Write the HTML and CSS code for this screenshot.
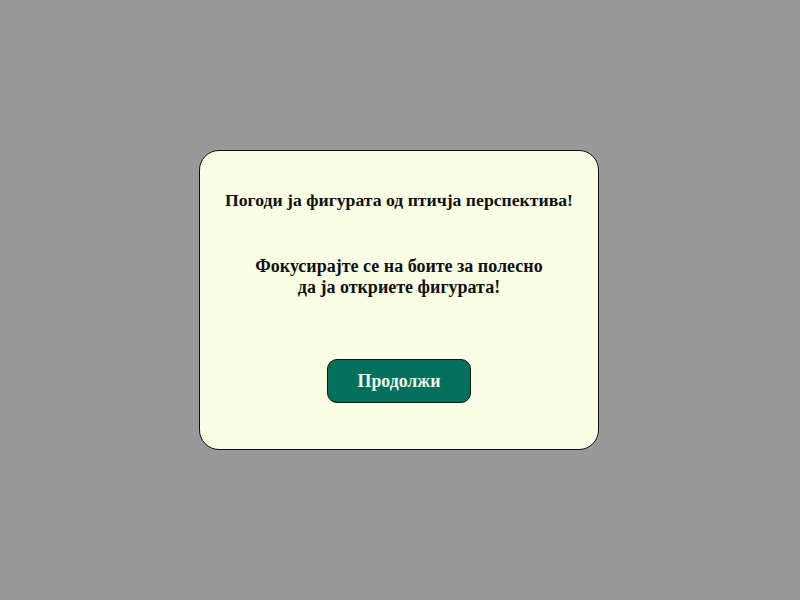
FILE: index.html
```html
<!DOCTYPE html>
<html lang="mk">
<head>
<meta charset="utf-8">
<title>Погоди ја фигурата</title>
<link rel="stylesheet" href="styles.css">
</head>
<body>
<main class="stage">
  <section class="card">
    <h1 class="title">Погоди ја фигурата од птичја перспектива!</h1>
    <p class="text">Фокусирајте се на боите за полесно<br>да ја откриете фигурата!</p>
    <button class="btn" type="button">Продолжи</button>
  </section>
</main>
</body>
</html>
```
FILE: styles.css
```css
html, body {
  margin: 0;
  padding: 0;
  height: 100%;
}
body {
  background: #999999;
  font-family: "Liberation Serif", "DejaVu Serif", serif;
  color: #111111;
}
.stage {
  box-sizing: border-box;
  height: 600px;
  display: flex;
  align-items: center;
  justify-content: center;
  padding-right: 2px;
}
.card {
  box-sizing: border-box;
  width: 400px;
  height: 300px;
  background: #fafee4;
  border: 1px solid #111111;
  border-radius: 20px;
  display: flex;
  flex-direction: column;
  align-items: center;
  padding-top: 39px;
}
.title {
  margin: 0;
  font-size: 17.7px;
  line-height: 20px;
  font-weight: bold;
  text-align: center;
  white-space: nowrap;
}
.text {
  margin: 46px 0 0;
  font-size: 18px;
  line-height: 21px;
  font-weight: bold;
  text-align: center;
}
.btn {
  margin-top: 61px;
  width: 144px;
  height: 44px;
  background: #02705a;
  color: #f4f7ec;
  border: 1px solid #111111;
  border-radius: 10px;
  font-family: "Liberation Serif", "DejaVu Serif", serif;
  font-size: 17.8px;
  font-weight: bold;
  padding: 0;
}
```
